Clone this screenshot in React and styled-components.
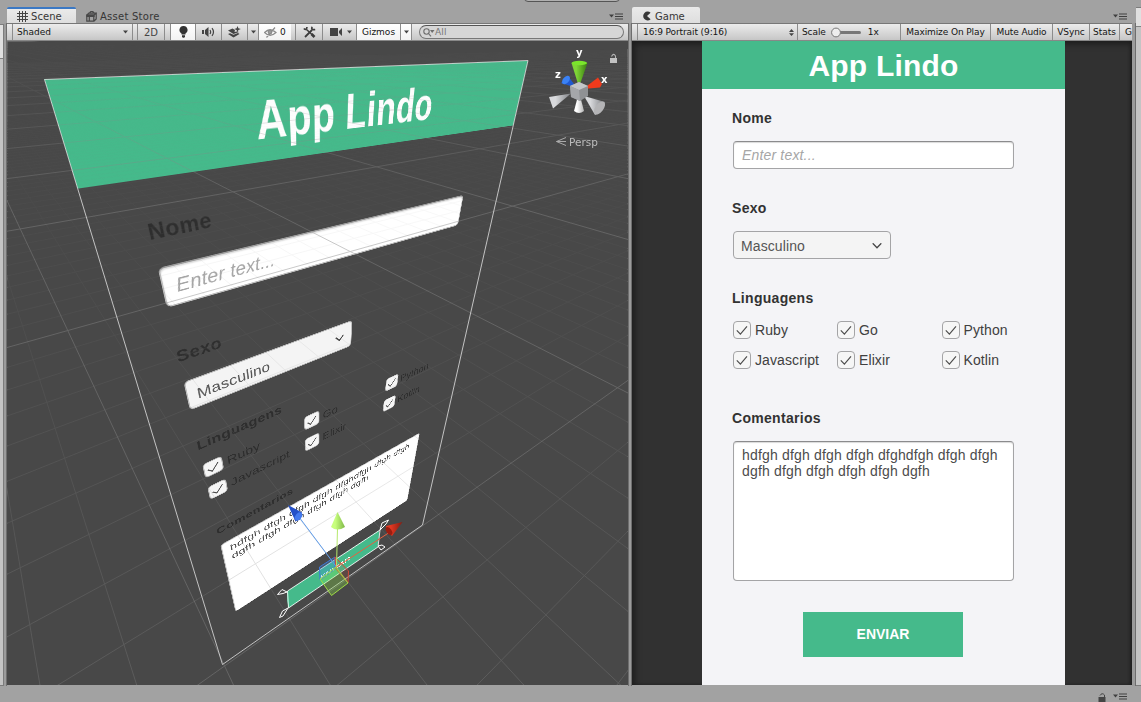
import React from "react";
import styled, { createGlobalStyle, css } from "styled-components";

const GREEN = "#45ba8b";

const GlobalStyle = createGlobalStyle`
  * { box-sizing: border-box; }
  html, body { margin: 0; padding: 0; overflow: hidden; background: #a2a2a2; }
`;

/* ---------- editor chrome ---------- */

const Editor = styled.div`
  width: 1141px;
  height: 702px;
  overflow: hidden;
  display: flex;
  flex-direction: column;
  background: #a2a2a2;
  font-family: "DejaVu Sans", "Noto Sans", sans-serif;
  color: #222;
  position: relative;
`;

const PlayControls = styled.div`
  position: absolute;
  top: -12px;
  left: 524px;
  width: 96px;
  height: 14px;
  border: 1px solid #555;
  border-radius: 4px;
  background: #b0b0b0;
`;

const Workspace = styled.div`
  height: 686px;
  display: flex;
`;

const SideStrip = styled.div`
  flex: none;
  width: ${(p) => p.$width}px;
  margin-top: ${(p) => p.$top}px;
  background: linear-gradient(#e0e0e0 0 ${(p) => p.$split}px, #828282 ${(p) => p.$split}px ${(p) => p.$split + 1}px, #c4c4c4 ${(p) => p.$split + 1}px);
  border: 0 solid #7c7c7c;
  border-right-width: ${(p) => (p.$right ? 0 : 1)}px;
  border-top-width: 1px;
  border-bottom-width: 1px;
`;

const Gutter = styled.div`
  flex: none;
  width: ${(p) => p.$width}px;
  margin-top: 23px;
  background: #9b9b9b;
  border: 0 solid #6e6e6e;
  border-right-width: 1px;
  border-left-width: ${(p) => (p.$both ? 1 : 0)}px;
`;

const Panel = styled.section`
  flex: none;
  width: ${(p) => p.$width}px;
  display: flex;
  flex-direction: column;
`;

const TabBar = styled.div`
  height: 23px;
  padding-top: 7px;
  display: flex;
`;

const Tab = styled.div`
  width: ${(p) => p.$width}px;
  height: 16px;
  display: flex;
  align-items: center;
  gap: 3px;
  padding: ${(p) => (p.$focused ? 0 : 2)}px 0 0 10px;
  font-size: 10px;
  letter-spacing: ${(p) => p.$spacing || 0}px;
  white-space: nowrap;
  color: #363636;
  ${(p) =>
    p.$active &&
    css`
      background: linear-gradient(#eaeaea, #dedede);
      border-radius: 2px 2px 0 0;
    `}
  ${(p) => p.$focused && css`border-top: 2px solid #3a78c4;`}
`;

const TabMenu = styled.div`
  margin-left: auto;
  padding: 6px ${(p) => p.$right}px 0 0;
  line-height: 0;
`;

const Toolbar = styled.div`
  height: 18px;
  display: flex;
  overflow: hidden;
  border-top: 1px solid #777;
  border-bottom: 1px solid #888;
  background: linear-gradient(#ececec, #c6c6c6);
`;

const ToolCell = styled.div`
  flex: none;
  width: ${(p) => p.$width}px;
  height: 16px;
  display: flex;
  align-items: center;
  justify-content: ${(p) => p.$justify || "center"};
  padding: ${(p) => p.$pad || "0"};
  font-size: ${(p) => p.$size || 9}px;
  font-weight: 400;
  letter-spacing: ${(p) => p.$spacing || 0}px;
  white-space: nowrap;
  color: ${(p) => p.$color || "#141414"};
  border-right: ${(p) => (p.$plain ? 0 : 1)}px solid #8c8c8c;
  ${(p) => p.$on && css`background: linear-gradient(#ffffff, #f2f2f2);`}
`;

const Search = styled.div`
  width: 205px;
  height: 14px;
  margin: 1px 0 0 7px;
  border: 1px solid #777;
  border-top-color: #555;
  border-radius: 7px;
  background: #d6d6d6;
  display: flex;
  align-items: center;
  padding-left: 3px;
  font-size: 9px;
  letter-spacing: 0.2px;
  color: #777;
`;

const StatusBar = styled.footer`
  height: 16px;
  display: flex;
  justify-content: flex-end;
  gap: 7px;
  padding: 7px 14px 0 0;
`;

/* ---------- the mobile form ---------- */

const Phone = styled.div`
  --edge: ${(p) => (p.$filled ? "#a4a4a6" : "#bdbdbd")};
  --edge-top: ${(p) => (p.$filled ? "#8b8b8d" : "#9c9c9c")};
  --choice: ${(p) => (p.$filled ? "#404040" : "#2d2d2d")};
  width: 363px;
  height: 644px;
  font-family: "Liberation Sans", Arial, sans-serif;
  color: ${(p) => (p.$filled ? "#323232" : "#2e2e2e")};
  background: ${(p) => (p.$filled ? "#f4f4f7" : "transparent")};
`;

const AppHeader = styled.div`
  height: 48px;
  display: flex;
  align-items: center;
  justify-content: center;
  background: ${GREEN};
  color: #fff;
  font-size: 30px;
  font-weight: 700;
  letter-spacing: 0.2px;
  padding-top: 2px;
`;

const FormBody = styled.div`
  padding: 14px 0 0 31px;
`;

const Field = styled.div`
  margin-bottom: ${(p) => p.$after}px;
`;

const FieldLabel = styled.div`
  height: 30px;
  line-height: 30px;
  margin: 0 0 8px -1px;
  font-size: 14px;
  font-weight: 700;
  letter-spacing: 0.3px;
`;

const TextBox = styled.div`
  width: 281px;
  height: ${(p) => p.$height}px;
  border: 1px solid var(--edge);
  border-top-color: var(--edge-top);
  border-radius: 4px;
  background: #fff;
  box-shadow: inset 0 1px 1px #dadada;
  padding: 5px 5px 0 8px;
  font-size: 14px;
  line-height: 16px;
  letter-spacing: 0.17px;
  color: ${(p) => (p.$hint ? "#a6a6a6" : "#4c4c4c")};
  font-style: ${(p) => (p.$hint ? "italic" : "normal")};
`;

const SelectBox = styled.div`
  width: 158px;
  height: 28px;
  border: 1px solid var(--edge);
  border-radius: 4px;
  background: #f4f4f4;
  display: flex;
  align-items: center;
  justify-content: space-between;
  padding: 2px 8px 0 7px;
  font-size: 14px;
  letter-spacing: 0.1px;
  color: #555;
`;

const CheckGrid = styled.div`
  display: grid;
  grid-template-columns: 104px 104.5px 100px;
  row-gap: 12px;
`;

const CheckItem = styled.div`
  height: 18px;
  display: flex;
  align-items: center;
  gap: 4px;
  font-size: 14px;
  letter-spacing: 0.1px;
  color: var(--choice);
`;

const CheckBox = styled.span`
  width: 18px;
  height: 18px;
  border: 1px solid var(--edge);
  border-radius: 4px;
  background: #f6f6f6;
  display: flex;
  align-items: center;
  justify-content: center;
`;

const SendButton = styled.div`
  width: 160px;
  height: 45px;
  margin-left: 70px;
  padding-bottom: 2px;
  display: flex;
  align-items: center;
  justify-content: center;
  background: ${GREEN};
  color: #fff;
  font-size: 14px;
  font-weight: 700;
`;

const LANGUAGES = ["Ruby", "Go", "Python", "Javascript", "Elixir", "Kotlin"];

function FormScreen({ filled }) {
  return (
    <Phone $filled={filled}>
      <AppHeader>App Lindo</AppHeader>
      <FormBody>
        <Field $after={24}>
          <FieldLabel>Nome</FieldLabel>
          <TextBox $height={28} $hint>Enter text...</TextBox>
        </Field>
        <Field $after={24}>
          <FieldLabel>Sexo</FieldLabel>
          <SelectBox>
            Masculino
            <svg width="10" height="7" viewBox="0 0 10 7" fill="none" stroke="#444" strokeWidth="1.3">
              <path d="M0.7 0.3 5 4.7 9.3 0.3" />
            </svg>
          </SelectBox>
        </Field>
        <Field $after={34}>
          <FieldLabel>Linguagens</FieldLabel>
          <CheckGrid>
            {LANGUAGES.map((name) => (
              <CheckItem key={name}>
                <CheckBox>
                  <svg width="12" height="11" viewBox="0 0 12 11" fill="none" stroke="#4c4c4c" strokeWidth="1.15">
                    <path d="M0.8 5.3 4.4 9.2 11 1.4" />
                  </svg>
                </CheckBox>
                {name}
              </CheckItem>
            ))}
          </CheckGrid>
        </Field>
        <Field $after={31}>
          <FieldLabel>Comentarios</FieldLabel>
          <TextBox $height={140}>
            hdfgh dfgh dfgh dfgh dfghdfgh dfgh dfgh dgfh dfgh dfgh dfgh dfgh dgfh
          </TextBox>
        </Field>
        <SendButton>ENVIAR</SendButton>
      </FormBody>
    </Phone>
  );
}

/* ---------- scene view ---------- */

const SceneView = styled.div`
  position: relative;
  height: 644px;
  overflow: hidden;
  background: #484848;
`;

const ScenePlane = styled.div`
  position: absolute;
  top: 0;
  left: 0;
  transform-origin: 0 0;
`;

const SceneOverlay = styled.svg`
  position: absolute;
  top: 0;
  left: 0;
`;

const GameView = styled.div`
  height: 644px;
  display: flex;
  justify-content: center;
  padding-left: 3px;
  background: #313131;
  box-shadow: inset 3px 3px 6px #1d1d1d, inset -2px 0 3px #222;
`;

// Projective transform taking a w×h rectangle to four corners (TL, TR, BR, BL).
function quadMatrix(w, h, [p0, p1, p2, p3]) {
  const dx1 = p1[0] - p2[0];
  const dy1 = p1[1] - p2[1];
  const dx2 = p3[0] - p2[0];
  const dy2 = p3[1] - p2[1];
  const sx = p0[0] - p1[0] + p2[0] - p3[0];
  const sy = p0[1] - p1[1] + p2[1] - p3[1];
  const den = dx1 * dy2 - dx2 * dy1;
  const g = (sx * dy2 - dx2 * sy) / den;
  const k = (dx1 * sy - sx * dy1) / den;
  const a = (p1[0] - p0[0] + g * p1[0]) / w;
  const d = (p1[1] - p0[1] + g * p1[1]) / w;
  const b = (p3[0] - p0[0] + k * p3[0]) / h;
  const e = (p3[1] - p0[1] + k * p3[1]) / h;
  return `matrix3d(${[a, d, 0, g / w, b, e, 0, k / h, 0, 0, 1, 0, p0[0], p0[1], 0, 1].join(",")})`;
}

const CANVAS_CORNERS = [[44.5, 79.5], [528, 60.5], [422.5, 525], [222.5, 664.5]];
const PLANE_MATRIX = quadMatrix(363, 644, CANVAS_CORNERS.map(([x, y]) => [x - 7, y - 41]));

// Floor lines run from a vanishing point through evenly spaced stops at y = 500.
function floorLines(vx, vy, start, step, from, to) {
  const lines = [];
  for (let i = from; i <= to; i += 1) {
    const x500 = start + i * step;
    const x = vx + ((x500 - vx) * (700 - vy)) / (500 - vy);
    lines.push({ key: `${vx}:${i}`, major: i % 10 === 0, x1: vx, y1: vy, x2: x, y2: 700 });
  }
  return lines;
}

const GRID = [
  ...floorLines(1110, 39, -538, 99.7, -190, 16),
  ...floorLines(-69, 38, 147, 69.1, -3, 160),
];

function Grid() {
  return (
    <g stroke="#878787" strokeWidth="1">
      <defs>
        <linearGradient id="minorFade" x1="0" y1="41" x2="0" y2="685" gradientUnits="userSpaceOnUse">
          <stop offset="0" stopColor="#fff" stopOpacity="0" />
          <stop offset="0.1" stopColor="#fff" stopOpacity="0.02" />
          <stop offset="0.45" stopColor="#fff" stopOpacity="0.1" />
          <stop offset="1" stopColor="#fff" stopOpacity="0.32" />
        </linearGradient>
        <linearGradient id="majorFade" x1="0" y1="41" x2="0" y2="685" gradientUnits="userSpaceOnUse">
          <stop offset="0" stopColor="#fff" stopOpacity="0" />
          <stop offset="0.06" stopColor="#fff" stopOpacity="0.1" />
          <stop offset="0.25" stopColor="#fff" stopOpacity="0.45" />
          <stop offset="1" stopColor="#fff" stopOpacity="0.45" />
        </linearGradient>
        <mask id="minorMask" maskUnits="userSpaceOnUse" x="7" y="41" width="621" height="644">
          <rect x="7" y="41" width="621" height="644" fill="url(#minorFade)" />
        </mask>
        <mask id="majorMask" maskUnits="userSpaceOnUse" x="7" y="41" width="621" height="644">
          <rect x="7" y="41" width="621" height="644" fill="url(#majorFade)" />
        </mask>
      </defs>
      {[false, true].map((major) => (
        <g key={String(major)} mask={major ? "url(#majorMask)" : "url(#minorMask)"}>
          {GRID.filter((l) => l.major === major).map((l) => (
            <line key={l.key} x1={l.x1} y1={l.y1} x2={l.x2} y2={l.y2} />
          ))}
        </g>
      ))}
    </g>
  );
}

function Selection() {
  return (
    <g fill="none" stroke="#fff" strokeWidth="1">
      <polygon points="44.5,79.5 528,60.5 422.5,525 222.5,664.5" stroke="#d8d8d8" strokeOpacity="0.85" />
      <polygon points="287.5,591 380,530 378,547 288.5,608" strokeOpacity="0.85" />
      <path d="M287 592 282 589.500 277.500 594.500 283 593.500ZM288 608 282.500 611 279.500 617.500 283 616ZM380 530 382 523 388.500 520 386 524ZM378 546 381 550 385 547 382 545Z" />
    </g>
  );
}

function MoveGizmo() {
  return (
    <g fill="none" strokeWidth="1">
      <path d="M319.500 567 335 557 335 569 320 580Z" fill="#3f8fd8" fillOpacity="0.3" stroke="#3f78d8" />
      <path d="M335 557 348.500 571 348 583 336 569Z" fill="#d84a30" fillOpacity="0.15" stroke="#d24a35" />
      <path d="M320 579 336 567 348 583 331.500 595.500Z" fill="#8ee84a" fillOpacity="0.3" stroke="#9fdc45" />
      <path d="M336.500 567 299 517" stroke="#5d9bea" />
      <path d="M336.500 567 337.500 528" stroke="#b5e86b" />
      <path d="M336.500 567 390 532" stroke="#e8603f" />
      <path d="M288 505 302 512.500 300 518 295.500 521.500Z" fill="#2450c8" />
      <ellipse cx="298.500" cy="516.500" rx="3" ry="4.500" transform="rotate(40 298.5 516.5)" fill="#4379ee" />
      <path d="M337.500 512 331 527Q337 532 345 527Z" fill="url(#limeCone)" />
      <path d="M402.500 522 386 526 387 532 392 536Z" fill="url(#redCone)" />
      <ellipse cx="389" cy="531" rx="2.500" ry="4.500" transform="rotate(-35 389 531)" fill="#9c1d10" />
    </g>
  );
}

function AxisGizmo() {
  return (
    <g>
      <path d="M571 93.500 549 97 553 108.500Z" fill="url(#grayCone)" />
      <path d="M584 96 605 102Q604 112 595 115Z" fill="url(#grayCone)" />
      <ellipse cx="599.500" cy="108" rx="4" ry="7.500" transform="rotate(38 599.5 108)" fill="#b4b4b6" />
      <path d="M579 92 574 111Q579 115 584 111Z" fill="url(#whiteCone)" />
      <path d="M577 88 561 83 568 76Z" fill="#1f58d0" />
      <ellipse cx="566" cy="80" rx="3" ry="5" transform="rotate(40 566 80)" fill="#3a82f6" />
      <path d="M583 89 598 77.500 602 84 600 87.500Z" fill="#f03a1c" />
      <path d="M579 87 571.500 63H587.500Z" fill="url(#greenCone)" />
      <ellipse cx="579.300" cy="63" rx="7.800" ry="2.200" fill="#7be52c" />
      <path d="M570 86 579 82 588 86 588 96 580 101 571 97Z" fill="#8f9194" />
      <path d="M570 86 579 82 588 86 579 90Z" fill="#c3c5c8" />
      <path d="M570 86 579 90 580 101 571 97Z" fill="#a5a7aa" />
      <g fill="#fff" fontSize="10" fontWeight="700">
        <text x="576" y="56">y</text>
        <text x="555" y="78">z</text>
        <text x="601" y="83">x</text>
      </g>
      <path d="M611.500 56.500Q613.500 52.500 615.500 56V59" fill="none" stroke="#b5b5b5" strokeWidth="1.100" />
      <rect x="610" y="58" width="7" height="5" fill="#c2c2c2" />
      <path d="M566 137.500 556.500 141.500 566 145.500M566 141.500H556.500" fill="none" stroke="#aaa" />
      <text x="569" y="146" fontSize="10.500" fill="#bdbdbd">Persp</text>
    </g>
  );
}

function Gradients() {
  const cones = [
    ["limeCone", "#c8ff7e", "#7fb848"],
    ["redCone", "#e23822", "#841a10"],
    ["grayCone", "#d8d9dc", "#7e8084"],
    ["whiteCone", "#ffffff", "#b4b4b4"],
    ["greenCone", "#7fd636", "#3a7a12"],
  ];
  return (
    <defs>
      {cones.map(([id, a, b]) => (
        <linearGradient key={id} id={id}>
          <stop offset="0.3" stopColor={a} />
          <stop offset="1" stopColor={b} />
        </linearGradient>
      ))}
    </defs>
  );
}

/* ---------- icons ---------- */

const Caret = ({ color = "#444" }) => (
  <svg width="5" height="4" viewBox="0 0 5 4"><path d="M0 0.500H5L2.500 3.500Z" fill={color} /></svg>
);

const MenuIcon = () => (
  <svg width="14" height="7" viewBox="0 0 14 7" fill="#404040">
    <path d="M0 1.500H5L2.500 4.500ZM6 0.500H14V1.500H6ZM6 3H14V4H6ZM6 5.500H14V6.500H6Z" />
  </svg>
);

const HashIcon = () => (
  <svg width="11" height="11" viewBox="0 0 11 11" stroke="#444" strokeWidth="1">
    <path d="M2.500 0V11M5.500 0V11M8.500 0V11M0 2.500H11M0 5.500H11M0 8.500H11" />
  </svg>
);

const BoxIcon = () => (
  <svg width="11" height="11" viewBox="0 0 11 11" fill="none" stroke="#484848" strokeWidth="1.200">
    <path d="M0.800 4.200H7.800V10.200H0.800ZM0.800 4.200 2.800 2.200H10.200L7.800 4.200M7.800 10.200 10.200 8V2.200M3.300 4V10M3.500 2Q5-0.500 7 0.800L8 2" />
    <path d="M1 4H8V5.500H1Z" fill="#484848" />
  </svg>
);

const GameIcon = () => (
  <svg width="10" height="10" viewBox="0 0 10 10">
    <path d="M8.600 1.800A4.400 4.400 0 1 0 8.600 8.200L5 5Z" fill="#383838" />
  </svg>
);

const BulbIcon = () => (
  <svg width="9" height="12" viewBox="0 0 9 12" fill="#333">
    <path d="M4.500 0A4 4 0 0 0 2.500 7.500V8.500H6.500V7.500A4 4 0 0 0 4.500 0ZM3 9.300H6V11L5 11.700H4L3 11Z" />
  </svg>
);

const SoundIcon = () => (
  <svg width="13" height="10" viewBox="0 0 13 10" fill="none" stroke="#444" strokeWidth="1.200">
    <path d="M0 3H2V7H0ZM3 3 6.500 0V10L3 7Z" fill="#444" stroke="none" />
    <path d="M8 3Q9.300 5 8 7M10 1.200Q13 5 10 8.800" />
  </svg>
);

const EffectsIcon = () => (
  <svg width="13" height="12" viewBox="0 0 13 12" fill="#444">
    <path d="M0 4.500 4.500 2.500 7 4 6.500 6 9 5.500 11 6 5.500 8ZM0 8 2 7.200 5.500 8.800 10 7 11.500 8 5.500 11.500Z" />
    <path d="M9.500 0 10.400 2.300 12.800 3 10.400 4 9.500 6.300 8.600 4 6.300 3 8.600 2.300Z" />
  </svg>
);

const HiddenEyeIcon = () => (
  <svg width="13" height="11" viewBox="0 0 13 11" fill="none" stroke="#8b8b8b" strokeWidth="1.200">
    <path d="M0.600 5.500Q6 0 12 5.500Q6 11 0.600 5.500ZM11 0.500 2.500 10.500" />
    <circle cx="6" cy="5" r="1.800" fill="#999" />
  </svg>
);

const ToolsIcon = () => (
  <svg width="13" height="12" viewBox="0 0 13 12" fill="none" stroke="#3c3c3c">
    <path d="M3.500 3.500 9 8.500" strokeWidth="1.500" />
    <path d="M8.500 8 11.500 11" strokeWidth="2.600" />
    <path d="M9 4 2 11" strokeWidth="1.800" />
    <path d="M0.800 2.500Q3.500 5 4 1M9 0.800Q8 4.500 12.200 3.500" strokeWidth="1.700" />
  </svg>
);

const CameraIcon = () => (
  <svg width="13" height="8" viewBox="0 0 13 8" fill="#444">
    <path d="M0 0H8V8H0ZM9 3 12 0V8L9 5Z" />
  </svg>
);

const SearchIcon = () => (
  <svg width="12" height="9" viewBox="0 0 12 9" fill="none" stroke="#6e6e6e" strokeWidth="1.100">
    <circle cx="3.500" cy="3.500" r="2.700" />
    <path d="M5.500 5.500 8 8.300" />
    <path d="M7 2H11.500L9.200 5Z" fill="#6e6e6e" stroke="none" />
  </svg>
);

const StepperIcon = () => (
  <svg width="5" height="7" viewBox="0 0 5 7" fill="#444"><path d="M0 3 2.500 0 5 3ZM0 4.200H5L2.500 7Z" /></svg>
);

const SliderIcon = () => (
  <svg width="31" height="11" viewBox="0 0 31 11">
    <rect x="8" y="4" width="22" height="3" rx="1.500" fill="#777" />
    <circle cx="5" cy="5.500" r="4.400" fill="#eee" stroke="#777" />
  </svg>
);

const LockIcon = () => (
  <svg width="8" height="9" viewBox="0 0 8 9">
    <path d="M2 2.500Q4-0.800 6.500 2V4" fill="none" stroke="#444" />
    <rect x="0.500" y="4" width="7" height="5" fill="#444" />
  </svg>
);

export default function App() {
  return (
    <Editor>
      <GlobalStyle />
      <PlayControls />
      <Workspace>
        <SideStrip $width={4} $top={24} $split={33} />
        <Gutter $width={3} />
        <Panel $width={621}>
          <TabBar>
            <Tab $width={69} $active $focused $spacing={0.05}><HashIcon />Scene</Tab>
            <Tab $width={95} $spacing={0.25}><BoxIcon />Asset Store</Tab>
            <TabMenu $right={5}><MenuIcon /></TabMenu>
          </TabBar>
          <Toolbar>
            <ToolCell $width={6} />
            <ToolCell $width={120} $justify="space-between" $pad="0 4px 0 4px">Shaded <Caret /></ToolCell>
            <ToolCell $width={5} />
            <ToolCell $width={27} $size={10} $color="#444">2D</ToolCell>
            <ToolCell $width={6} />
            <ToolCell $width={25} $on><BulbIcon /></ToolCell>
            <ToolCell $width={26}><SoundIcon /></ToolCell>
            <ToolCell $width={26}><EffectsIcon /></ToolCell>
            <ToolCell $width={11}><Caret /></ToolCell>
            <ToolCell $width={32} $on $plain><HiddenEyeIcon />&nbsp;0</ToolCell>
            <ToolCell $width={5} />
            <ToolCell $width={27}><ToolsIcon /></ToolCell>
            <ToolCell $width={34} $justify="space-between" $pad="0 4px 0 7px"><CameraIcon /><Caret /></ToolCell>
            <ToolCell $width={44} $on>Gizmos</ToolCell>
            <ToolCell $width={11} $on><Caret /></ToolCell>
            <Search><SearchIcon />All</Search>
          </Toolbar>
          <SceneView>
            <ScenePlane style={{ transform: PLANE_MATRIX }}>
              <FormScreen />
            </ScenePlane>
            <SceneOverlay width="621" height="644" viewBox="7 41 621 644">
              <Gradients />
              <Grid />
              <Selection />
              <MoveGizmo />
              <AxisGizmo />
            </SceneOverlay>
          </SceneView>
        </Panel>
        <Gutter $width={4} $both />
        <Panel $width={500}>
          <TabBar>
            <Tab $width={68} $active><GameIcon />Game</Tab>
            <TabMenu $right={5}><MenuIcon /></TabMenu>
          </TabBar>
          <Toolbar>
            <ToolCell $width={6} />
            <ToolCell $width={160} $justify="space-between" $pad="0 3px 0 5px" $spacing={-0.1}>16:9 Portrait (9:16) <StepperIcon /></ToolCell>
            <ToolCell $width={103} $justify="flex-start" $pad="0 0 0 4px" $spacing={-0.1}>Scale&nbsp;&nbsp;<SliderIcon />&nbsp;&nbsp;1x</ToolCell>
            <ToolCell $width={90} $spacing={-0.1}>Maximize On Play</ToolCell>
            <ToolCell $width={62} $spacing={-0.1}>Mute Audio</ToolCell>
            <ToolCell $width={37} $spacing={-0.1}>VSync</ToolCell>
            <ToolCell $width={30}>Stats</ToolCell>
            <ToolCell $width={12} $plain $justify="flex-start" $pad="0 0 0 5px">G</ToolCell>
          </Toolbar>
          <GameView>
            <FormScreen filled />
          </GameView>
        </Panel>
        <Gutter $width={4} />
        <SideStrip $width={5} $top={7} $split={18} $right />
      </Workspace>
      <StatusBar><LockIcon /><MenuIcon /></StatusBar>
    </Editor>
  );
}
